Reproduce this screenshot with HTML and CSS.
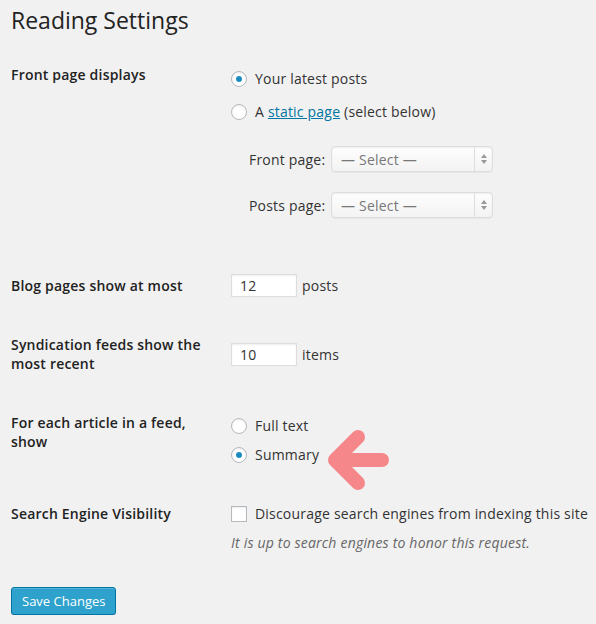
FILE: index.html
```html
<!DOCTYPE html>
<html>
<head>
<meta charset="utf-8">
<link rel="stylesheet" href="styles.css">
</head>
<body>
<div class="wrap">
  <h2 class="title">Reading Settings</h2>
  <div class="form-table">
    <div class="row row-front">
      <div class="th">Front page displays</div>
      <div class="td td-front">
        <label class="choice"><span class="radio checked"></span>Your latest posts</label>
        <label class="choice"><span class="radio"></span>A&nbsp;<a href="#" class="link">static page</a>&nbsp;(select below)</label>
        <div class="pages">
          <div class="page-row"><span class="page-label">Front page:</span><span class="select"><span class="select-text">— Select —</span><span class="select-arrows"><span class="up"></span><span class="down"></span></span></span></div>
          <div class="page-row"><span class="page-label">Posts page:</span><span class="select"><span class="select-text">— Select —</span><span class="select-arrows"><span class="up"></span><span class="down"></span></span></span></div>
        </div>
      </div>
    </div>
    <div class="row">
      <div class="th">Blog pages show at most</div>
      <div class="td td-mid"><span class="input">12</span><span class="unit">posts</span></div>
    </div>
    <div class="row">
      <div class="th">Syndication feeds show the<br>most recent</div>
      <div class="td td-mid"><span class="input">10</span><span class="unit">items</span></div>
    </div>
    <div class="row">
      <div class="th">For each article in a feed,<br>show</div>
      <div class="td td-feed">
        <label class="choice"><span class="radio"></span>Full text</label>
        <label class="choice"><span class="radio checked"></span>Summary</label>
      </div>
    </div>
    <div class="row">
      <div class="th">Search Engine Visibility</div>
      <div class="td td-search">
        <label class="choice"><span class="checkbox"></span>Discourage search engines from indexing this site</label>
        <p class="description">It is up to search engines to honor this request.</p>
      </div>
    </div>
  </div>
  <div class="submit"><button class="button-primary">Save Changes</button></div>
  <svg class="arrow" width="100" height="90" viewBox="0 0 100 90">
    <path d="M58 22 L35 45 L58 68 M35 45 L82 45" fill="none" stroke="#f5878b" stroke-width="14" stroke-linecap="round" stroke-linejoin="round"/>
  </svg>
</div>
</body>
</html>
```

FILE: styles.css
```css
html, body {
  margin: 0;
  padding: 0;
  background: #f1f1f1;
}
body {
  font-family: "Open Sans", "Liberation Sans", sans-serif;
  font-size: 14px;
  letter-spacing: 0.2px;
  color: #333;
}
.wrap {
  position: relative;
  padding-left: 11px;
}
.title {
  margin: 6px 0 0;
  font-size: 23px;
  line-height: 29px;
  font-weight: 400;
  letter-spacing: 0;
  color: #222;
}
.form-table {
  margin-top: 10px;
}
.row {
  display: flex;
}
.th {
  width: 220px;
  flex: none;
  box-sizing: border-box;
  padding: 20px 10px 20px 0;
  line-height: 19px;
  font-weight: 600;
  color: #222;
}
.td {
  flex: 1;
}
.td-mid {
  align-self: center;
  display: flex;
  align-items: center;
}
.td-front {
  padding-top: 24px;
  padding-bottom: 38px;
}
.choice {
  display: flex;
  align-items: center;
  height: 19px;
  line-height: 19px;
  white-space: nowrap;
}
.choice + .choice {
  margin-top: 14px;
}
.td-feed {
  padding-top: 23px;
  padding-bottom: 20px;
}
.td-feed .choice + .choice {
  margin-top: 10px;
}
.radio {
  width: 16px;
  height: 16px;
  box-sizing: border-box;
  border: 1px solid #b4b9be;
  border-radius: 50%;
  background: #fff;
  box-shadow: inset 0 1px 2px rgba(0,0,0,.07);
  margin-right: 8px;
  flex: none;
  display: flex;
  align-items: center;
  justify-content: center;
}
.radio.checked::after {
  content: "";
  width: 6px;
  height: 6px;
  border-radius: 50%;
  background: #1e8cbe;
}
.checkbox {
  width: 16px;
  height: 16px;
  box-sizing: border-box;
  border: 1px solid #b4b9be;
  background: #fff;
  box-shadow: inset 0 1px 2px rgba(0,0,0,.07);
  margin-right: 8px;
  flex: none;
}
.link {
  color: #0074a2;
  text-decoration: underline;
}
.pages {
  margin-top: 25px;
  padding-left: 18px;
}
.page-row {
  display: flex;
  align-items: center;
}
.page-row + .page-row {
  margin-top: 20px;
}
.page-label {
  width: 82px;
  line-height: 19px;
}
.select {
  width: 162px;
  height: 26px;
  box-sizing: border-box;
  border: 1px solid #ddd;
  border-radius: 4px;
  background: linear-gradient(#fefefe, #f3f3f3);
  box-shadow: inset 0 1px 2px rgba(0,0,0,.07), 0 1px 0 rgba(0,0,0,.04);
  display: flex;
  align-items: center;
}
.select-text {
  flex: 1;
  padding-left: 9px;
  color: #777;
}
.select-arrows {
  width: 17px;
  height: 24px;
  border-left: 1px solid #ddd;
  display: flex;
  flex-direction: column;
  align-items: center;
  justify-content: center;
  gap: 2px;
}
.up {
  width: 0; height: 0;
  border-left: 3px solid transparent;
  border-right: 3px solid transparent;
  border-bottom: 4px solid #999;
}
.down {
  width: 0; height: 0;
  border-left: 3px solid transparent;
  border-right: 3px solid transparent;
  border-top: 4px solid #999;
}
.input {
  width: 66px;
  height: 23px;
  box-sizing: border-box;
  border: 1px solid #ddd;
  background: #fff;
  box-shadow: inset 0 1px 2px rgba(0,0,0,.07);
  padding-left: 8px;
  line-height: 21px;
  color: #333;
}
.unit {
  margin-left: 5px;
  line-height: 19px;
}
.td-search {
  padding-top: 20px;
}
.description {
  margin: 10px 0 0;
  font-size: 14px;
  line-height: 19px;
  font-style: italic;
  color: #666;
}
.submit {
  padding-top: 35px;
}
.button-primary {
  font-family: "Open Sans", "Liberation Sans", sans-serif;
  font-size: 13px;
  letter-spacing: 0;
  height: 28px;
  line-height: 26px;
  padding: 0 10px 1px;
  background: #2ea2cc;
  border: 1px solid #0074a2;
  border-radius: 3px;
  color: #fff;
  box-shadow: inset 0 1px 0 rgba(120,200,230,.5), 0 1px 0 rgba(0,0,0,.15);
}
.arrow {
  position: absolute;
  left: 300px;
  top: 409px;
}
```
